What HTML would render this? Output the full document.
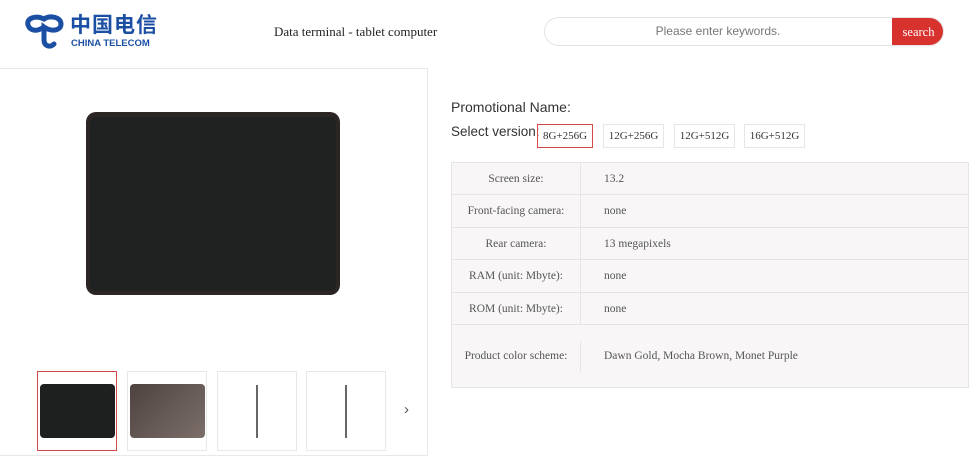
<!DOCTYPE html>
<html><head><meta charset="utf-8"><style>
*{margin:0;padding:0;box-sizing:border-box}
body{width:970px;height:457px;background:#fff;position:relative;overflow:hidden;font-family:"Liberation Serif",serif;color:#333}
.a{position:absolute}
.tbl{position:absolute;left:451px;top:162px;width:518px;height:226px;background:#f8f6f7;border:1px solid #e6e4e5}
.row{position:absolute;left:0;width:100%;border-bottom:1px solid #e6e4e5;font-size:11.5px;color:#555}
.row .l{position:absolute;left:0;width:129px;text-align:center;border-right:1px solid #e6e4e5;height:100%}
.row .v{position:absolute;left:152px}
.ver{position:absolute;top:124px;height:24px;border:1px solid #e6e6e6;font-size:11px;line-height:22px;text-align:center;color:#333}
.th{position:absolute;top:371px;width:80px;height:80px;border:1px solid #e8e8e8}
</style></head><body>
<svg class="a" style="left:24px;top:12px" width="42" height="38" viewBox="0 0 42 38"><path d="M4 13 C2 6 12 3 20 7 C26 3 37 5 37 12 C37 19 27 20 20 15 L20 28 C20 34 26 36 30 32 M20 15 C13 20 6 19 4 13" fill="none" stroke="#1a4fa3" stroke-width="5" stroke-linecap="round"/></svg>
<div class="a" style="left:70px;top:11px;font:bold 21px 'Noto Sans CJK SC',sans-serif;color:#1a4fa3;letter-spacing:1px;line-height:26px">中国电信</div>
<div class="a" style="left:71px;top:38px;font:bold 9.5px 'Liberation Sans',sans-serif;color:#1a4fa3">CHINA TELECOM</div>
<div class="a" style="left:274px;top:24px;font-size:13px;color:#222">Data terminal - tablet computer</div>
<div class="a" style="left:544px;top:17px;width:400px;height:29px;border:1px solid #e3e3e3;border-radius:15px;overflow:hidden">
<div class="a" style="left:0;width:346px;top:6px;text-align:center;font:12px 'Liberation Sans',sans-serif;color:#777">Please enter keywords.</div>
<div class="a" style="left:347px;top:0;width:53px;height:29px;background:#d8322f;color:#fff;font-size:12.5px;line-height:28px;text-align:center">search</div>
</div>
<div class="a" style="left:0;top:68px;width:428px;height:388px;border:1px solid #e8e8e8;border-left:none"></div>
<div class="a" style="left:86px;top:112px;width:254px;height:183px;background:#2b2524;border-radius:10px"></div>
<div class="a" style="left:90px;top:117px;width:246px;height:174px;background:#202221;border-radius:7px"></div>
<div class="th" style="left:37px;border:1px solid #d24a48"><div class="a" style="left:2px;top:12px;width:75px;height:54px;background:#1e201f;border-radius:4px"></div></div>
<div class="th" style="left:127px"><div class="a" style="left:2px;top:12px;width:75px;height:54px;background:linear-gradient(135deg,#4e4240,#7c6f6a);border-radius:4px"></div></div>
<div class="th" style="left:217px"><div class="a" style="left:38px;top:13px;width:2px;height:53px;background:#666"></div></div>
<div class="th" style="left:306px"><div class="a" style="left:38px;top:13px;width:2px;height:53px;background:#666"></div></div>
<div class="a" style="left:404px;top:401px;font:15px 'Liberation Sans',sans-serif;color:#555">›</div>
<div class="a" style="left:451px;top:99px;font:14px 'Liberation Sans','DejaVu Sans',sans-serif;color:#333">Promotional Name:</div>
<div class="a" style="left:451px;top:124px;font:13.5px 'Liberation Sans','DejaVu Sans',sans-serif;color:#333">Select version:</div>
<div class="ver" style="left:537px;width:56px;border-color:#d24a48">8G+256G</div>
<div class="ver" style="left:603px;width:61px">12G+256G</div>
<div class="ver" style="left:674px;width:61px">12G+512G</div>
<div class="ver" style="left:744px;width:61px">16G+512G</div>
<div class="tbl">
<div class="row" style="top:0;height:32px;line-height:32px"><div class="l">Screen size:</div><div class="v">13.2</div></div>
<div class="row" style="top:32px;height:33px;line-height:33px"><div class="l">Front-facing camera:</div><div class="v">none</div></div>
<div class="row" style="top:65px;height:32px;line-height:32px"><div class="l">Rear camera:</div><div class="v">13 megapixels</div></div>
<div class="row" style="top:97px;height:33px;line-height:33px"><div class="l">RAM (unit: Mbyte):</div><div class="v">none</div></div>
<div class="row" style="top:130px;height:32px;line-height:32px"><div class="l">ROM (unit: Mbyte):</div><div class="v">none</div></div>
<div class="row" style="top:162px;height:62px;border:none"><div class="l" style="top:16px;height:31px;line-height:31px">Product color scheme:</div><div class="v" style="top:16px;line-height:31px">Dawn Gold, Mocha Brown, Monet Purple</div></div>
</div>
</body></html>
